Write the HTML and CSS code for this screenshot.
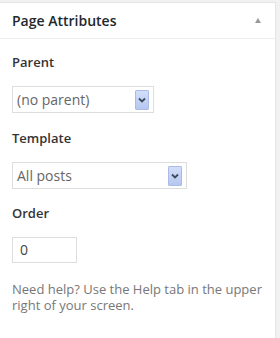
FILE: index.html
```html
<!DOCTYPE html>
<html>
<head>
<meta charset="utf-8">
<link rel="stylesheet" href="styles.css">
</head>
<body>
<div class="panel">
  <div class="panel-head">
    <h2 class="panel-title">Page Attributes</h2>
    <span class="toggle"></span>
  </div>
  <div class="panel-body">
    <p class="label">Parent</p>
    <div class="select sel-parent">
      <span class="sel-text">(no parent)</span>
      <span class="sel-btn"><svg width="8" height="6" viewBox="0 0 8 6"><path d="M1 1.5 L4 4.5 L7 1.5" fill="none" stroke="#3d4a5c" stroke-width="1.8"/></svg></span>
    </div>
    <p class="label">Template</p>
    <div class="select sel-template">
      <span class="sel-text">All posts</span>
      <span class="sel-btn"><svg width="8" height="6" viewBox="0 0 8 6"><path d="M1 1.5 L4 4.5 L7 1.5" fill="none" stroke="#3d4a5c" stroke-width="1.8"/></svg></span>
    </div>
    <p class="label">Order</p>
    <div class="order-input">0</div>
    <p class="help">Need help? Use the Help tab in the upper right of your screen.</p>
  </div>
</div>
</body>
</html>
```

FILE: styles.css
```css
html, body {
  margin: 0;
  padding: 0;
}
body {
  background: #f1f1f1;
  padding: 2px 4px 0 0;
  font-family: "Open Sans", "Noto Sans", sans-serif;
}
.panel {
  background: #fff;
  border: 1px solid #e5e5e5;
  border-left: none;
  box-sizing: border-box;
  width: 276px;
}
.panel-head {
  display: flex;
  align-items: center;
  justify-content: space-between;
  padding: 8px 14px 7px 12px;
  border-bottom: 1px solid #eeeeee;
}
.panel-title {
  margin: 0;
  font-size: 14px;
  line-height: 20px;
  font-weight: 600;
  color: #23282d;
}
.toggle {
  width: 0;
  height: 0;
  border-left: 3.5px solid transparent;
  border-right: 3.5px solid transparent;
  border-bottom: 5px solid #9a9a9a;
  margin-top: -2px;
}
.panel-body {
  padding: 14px 12px 26px 12px;
}
.label {
  margin: 0;
  font-size: 13px;
  line-height: 18px;
  font-weight: 600;
  color: #333;
}
.select {
  display: flex;
  align-items: center;
  justify-content: space-between;
  box-sizing: border-box;
  height: 27px;
  border: 1px solid #dddddd;
  background: #fff;
  padding: 0 4px 0 4px;
  margin: 15px 0 16px 0;
}
.sel-parent { width: 142px; }
.sel-template { width: 175px; margin-bottom: 15px; }
.sel-text {
  font-size: 14px;
  color: #666;
}
.sel-btn {
  display: flex;
  align-items: center;
  justify-content: center;
  box-sizing: border-box;
  width: 14px;
  height: 20px;
  border: 1px solid #a9bbe6;
  border-radius: 1px;
  background: linear-gradient(#d3defa, #b5c7f0);
}
.order-input {
  box-sizing: border-box;
  width: 65px;
  height: 26px;
  border: 1px solid #dddddd;
  margin-top: 15px;
  padding-left: 7px;
  font-size: 14px;
  line-height: 24px;
  color: #444;
}
.help {
  margin: 18px 0 0 0;
  font-size: 13px;
  line-height: 16px;
  color: #777;
}
```
